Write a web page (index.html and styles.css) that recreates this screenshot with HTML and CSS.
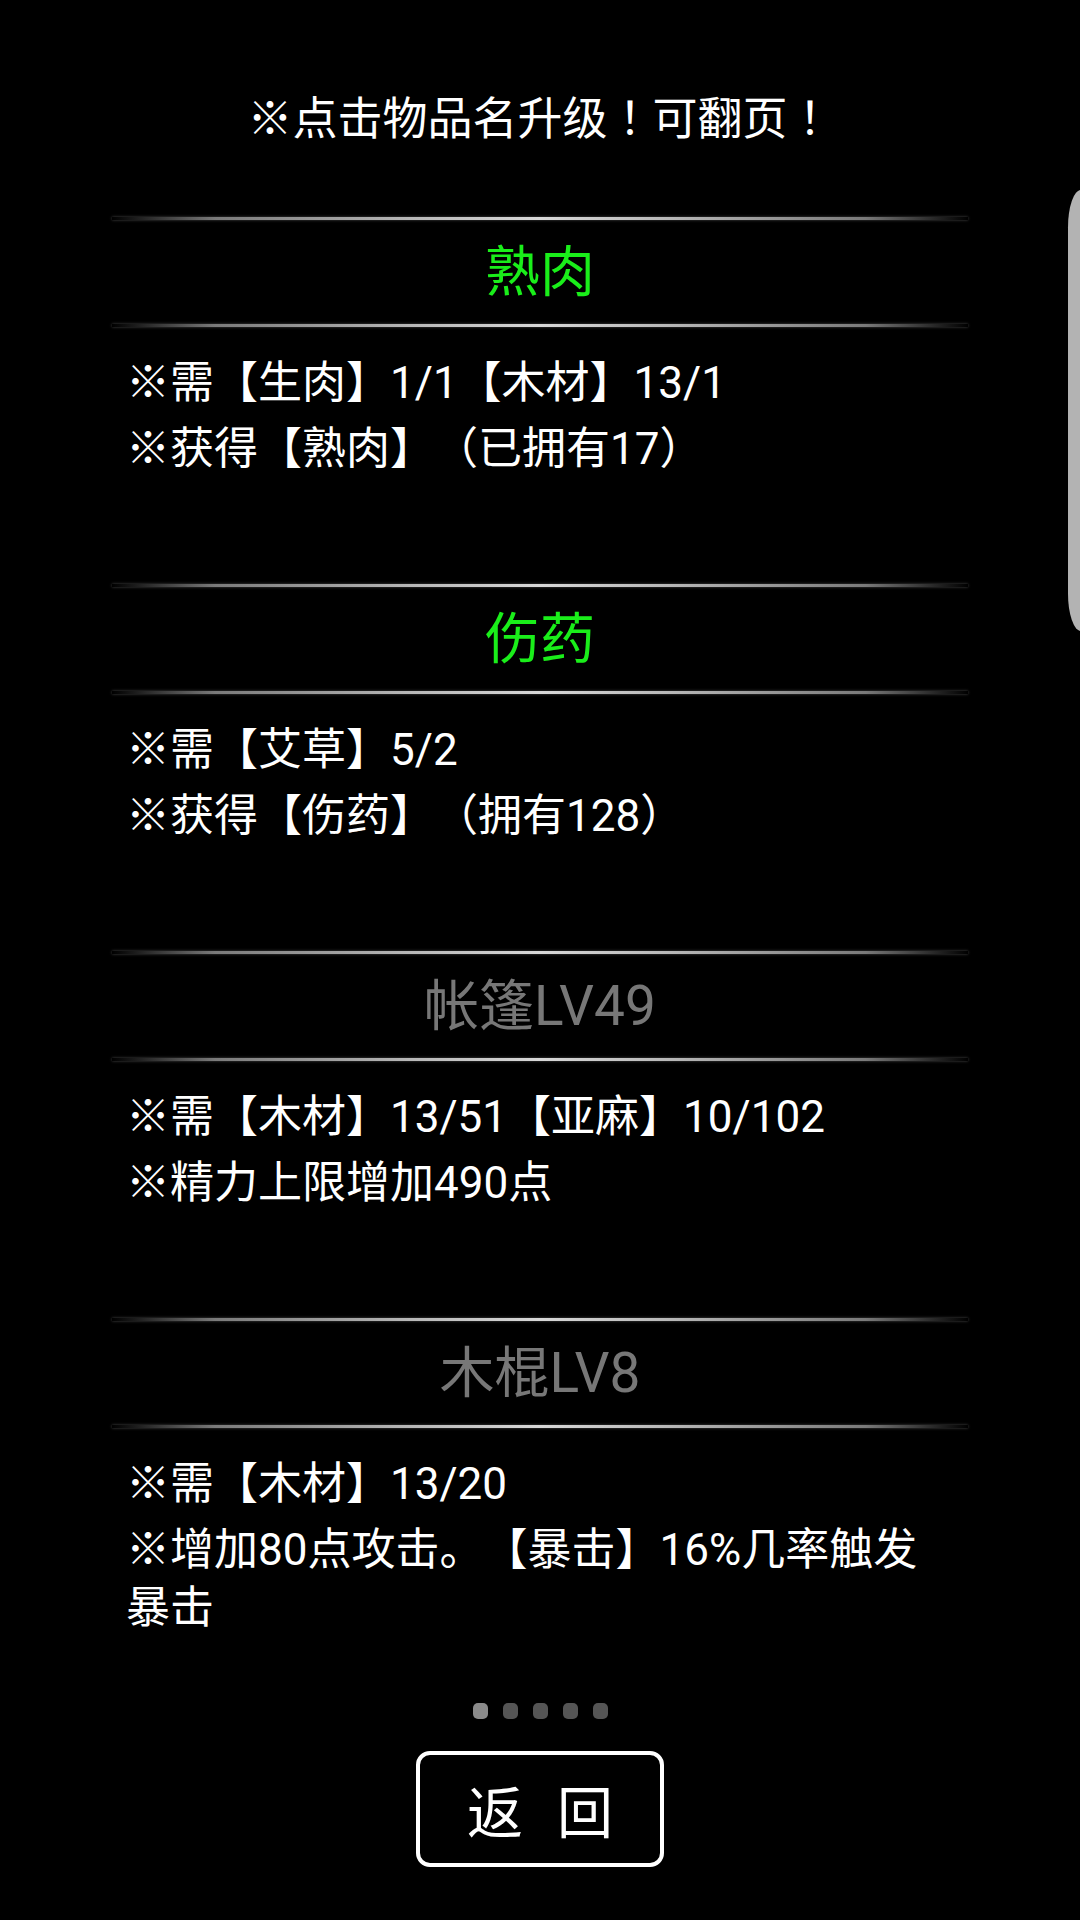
FILE: index.html
```html
<!DOCTYPE html>
<html lang="zh-CN">
<head>
<meta charset="utf-8">
<title>升级</title>
<link rel="stylesheet" href="styles.css">
</head>
<body>
<div class="screen">
  <div class="hint">※点击物品名升级<span class="bang" lang="zh-TW">！</span>可翻页<span class="bang" lang="zh-TW">！</span></div>
  <div class="list">
    <div class="item">
      <div class="divider"></div>
      <div class="title green">熟肉</div>
      <div class="divider"></div>
      <div class="desc">
        <p>※需【生肉】1/1【木材】13/1</p>
        <p>※获得【熟肉】（已拥有17）</p>
      </div>
    </div>
    <div class="item">
      <div class="divider"></div>
      <div class="title green">伤药</div>
      <div class="divider"></div>
      <div class="desc">
        <p>※需【艾草】5/2</p>
        <p>※获得【伤药】（拥有128）</p>
      </div>
    </div>
    <div class="item">
      <div class="divider"></div>
      <div class="title gray">帐篷LV49</div>
      <div class="divider"></div>
      <div class="desc">
        <p>※需【木材】13/51【亚麻】10/102</p>
        <p>※精力上限增加490点</p>
      </div>
    </div>
    <div class="item">
      <div class="divider"></div>
      <div class="title gray">木棍LV8</div>
      <div class="divider"></div>
      <div class="desc">
        <p>※需【木材】13/20</p>
        <p>※增加80点攻击。【暴击】16%几率触发暴击</p>
      </div>
    </div>
  </div>
  <div class="dots">
    <span class="dot active"></span>
    <span class="dot"></span>
    <span class="dot"></span>
    <span class="dot"></span>
    <span class="dot"></span>
  </div>
  <div class="btn-row">
    <div class="btn"><span>返</span><span>回</span></div>
  </div>
  <div class="scrollbar"></div>
</div>
</body>
</html>
```
FILE: styles.css
```css
html, body {
  margin: 0;
  padding: 0;
  background: #000;
}
body {
  width: 1080px;
  height: 1920px;
  overflow: hidden;
  font-family: Roboto, "Noto Sans CJK SC", "Noto Sans", sans-serif;
  color: #fff;
  text-spacing-trim: space-all;
}
.screen {
  position: relative;
  width: 1080px;
  height: 1920px;
}
.hint {
  padding-top: 90px;
  height: 60px;
  font-size: 45px;
  line-height: 60px;
  text-align: center;
  overflow: hidden;
}
.bang {
  font-family: "Noto Sans CJK TC", "Noto Sans CJK SC", sans-serif;
  line-height: 1;
}
.list {
  margin: 67px 112px 0 112px;
}
.item {
  height: 367px;
  display: flex;
  flex-direction: column;
}
.divider {
  height: 3px;
  flex: none;
  background: linear-gradient(90deg, rgba(120,120,120,0) 0%, #7a7a7a 12%, #b8b8b8 35%, #d8d8d8 50%, #b8b8b8 65%, #7a7a7a 88%, rgba(120,120,120,0) 100%);
  box-shadow: 0 0 3px rgba(110,110,110,0.7);
}
.title {
  height: 104px;
  line-height: 104px;
  font-size: 55px;
  text-align: center;
}
.green { color: #1aee1a; }
.gray { color: #777; }
.desc {
  padding: 27px 30px 0 14px;
  font-size: 44px;
  line-height: 58px;
  display: flex;
  flex-direction: column;
  gap: 8px;
}
.desc p {
  margin: 0;
}
.dots {
  margin-top: 18px;
  display: flex;
  justify-content: center;
  gap: 15px;
}
.dot {
  width: 15px;
  height: 16px;
  border-radius: 5px;
  background: #555;
}
.dot.active {
  background: #8a8a8a;
}
.btn-row {
  margin-top: 32px;
  display: flex;
  justify-content: center;
}
.btn {
  width: 240px;
  height: 108px;
  border: 4px solid #fff;
  border-radius: 14px;
  display: flex;
  align-items: center;
  justify-content: center;
  gap: 34px;
  font-size: 56px;
  font-family: "Noto Sans CJK SC", sans-serif;
  line-height: 1;
}
.scrollbar {
  position: absolute;
  top: 190px;
  right: -14px;
  width: 26px;
  height: 441px;
  background: #b3b3b3;
  border-radius: 14px / 40px;
}
```
